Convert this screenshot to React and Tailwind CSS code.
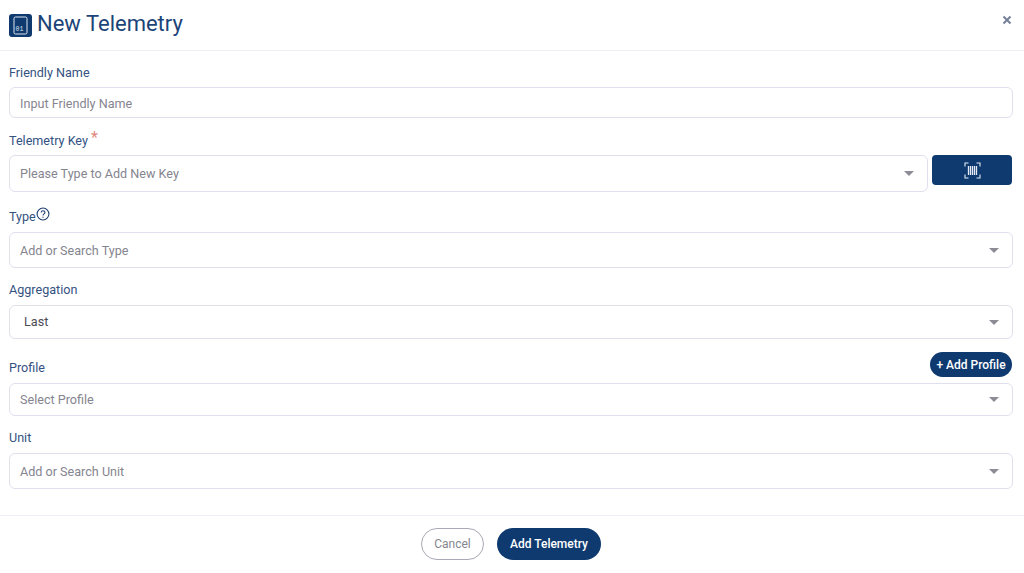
import { useState } from 'react';

const Arrow = () => (
  <span className="ml-auto mr-[13px] h-0 w-0 border-x-[5px] border-t-[5px] border-x-transparent border-t-[#8c8c96]" />
);

const SelectBox = ({ text, height, dark, flex, pad = 'pt-px' }) => (
  <div
    className={`flex items-center rounded-md border border-[#dfe0ec] bg-white ${height} ${dark ? 'pl-[14px]' : 'pl-[10px]'} ${flex ? 'flex-1' : 'w-full'}`}
  >
    <span className={`text-[12.6px] ${dark ? 'text-[#4a4a55]' : `text-[#85858f] ${pad}`}`}>{text}</span>
    <Arrow />
  </div>
);

const Label = ({ children, className }) => (
  <div className={`pt-px text-[12.6px] leading-[18px] text-[#34527f] ${className}`}>{children}</div>
);

const TelemetryIcon = () => (
  <span className="flex h-[23px] w-[23px] items-center justify-center rounded-[3px] bg-[#0f3a70]">
    <svg width="15" height="19" viewBox="0 0 15 19" fill="none">
      <rect x="1" y="1" width="13" height="17" rx="1.5" stroke="#dfe6f0" strokeWidth="1" />
      <text x="2.6" y="14.5" fontSize="6.5" fill="#dfe6f0" fontFamily="Liberation Mono, monospace">01</text>
    </svg>
  </span>
);

const ScanIcon = () => (
  <svg width="17" height="17" viewBox="0 0 17 17" fill="none" stroke="#e6ebf3" strokeWidth="1.1">
    <path d="M1 4.5V1h3.5M12.5 1H16v3.5M16 12.5V16h-3.5M4.5 16H1v-3.5" />
    <path d="M4.5 4v9M6.5 4v9M8.5 4v9M10.5 4v9M12.5 4v9" strokeWidth="1.3" />
  </svg>
);

const App = () => {
  const [name, setName] = useState('');

  return (
    <div className="flex h-[573px] w-[1024px] flex-col overflow-hidden bg-white font-['Roboto',sans-serif]">
      <div className="flex h-[51px] shrink-0 items-center border-b border-[#eeeef5] pl-[9px] pr-[12px]">
        <TelemetryIcon />
        <h1 className="mb-[2px] ml-[5px] text-[22px] font-normal leading-[28px] text-[#1c4478]">New Telemetry</h1>
        <svg className="ml-auto mb-[11px]" width="10" height="10" viewBox="0 0 10 10" stroke="#76809a" strokeWidth="2">
          <path d="M1.5 1.5l7 7M8.5 1.5l-7 7" />
        </svg>
      </div>

      <div className="flex flex-1 flex-col pl-[9px] pr-[11.5px]">
        <Label className="mt-[12px]">Friendly Name</Label>
        <input
          value={name}
          onChange={(e) => setName(e.target.value)}
          placeholder="Input Friendly Name"
          className="mt-[5px] h-[31px] w-full rounded-md border border-[#dfe0ec] px-[10px] pt-px text-[12.6px] outline-none placeholder:text-[#85858f]"
        />

        <Label className="mt-[13px]">
          Telemetry Key <span className="relative -top-[2px] text-[16px] leading-[14px] text-[#e08a80]">*</span>
        </Label>
        <div className="mt-[5px] flex items-start gap-[4px] pr-[0.5px]">
          <SelectBox text="Please Type to Add New Key" height="h-[37px]" flex />
          <button className="flex h-[30px] w-[80px] items-center justify-center rounded-[4px] bg-[#0f3a70]">
            <ScanIcon />
          </button>
        </div>

        <Label className="mt-[15px] flex items-start">
          Type
          <svg className="mt-[-1px]" width="14" height="14" viewBox="0 0 13 13" fill="none" stroke="#1f3f70">
            <circle cx="6.5" cy="6.5" r="5.5" strokeWidth="1" />
            <path d="M4.8 5.2c0-2.2 3.5-2.2 3.5-.1 0 1.3-1.8 1.3-1.8 2.7" strokeWidth="1" />
            <path d="M6.5 9v1" strokeWidth="1.1" />
          </svg>
        </Label>
        <div className="mt-[6px]">
          <SelectBox text="Add or Search Type" height="h-[36px]" pad="pt-[2px]" />
        </div>

        <Label className="mt-[12px]">Aggregation</Label>
        <div className="mt-[6px]">
          <SelectBox text="Last" height="h-[34px]" dark />
        </div>

        <div className="mt-[13px] flex items-end justify-between pr-[0.5px]">
          <Label>Profile</Label>
          <button className="flex h-[25px] w-[82px] items-center justify-center rounded-full bg-[#0f3a70] text-[12px] font-medium text-white">
            + Add Profile
          </button>
        </div>
        <div className="mt-[6px]">
          <SelectBox text="Select Profile" height="h-[33px]" />
        </div>

        <Label className="mt-[12px]">Unit</Label>
        <div className="mt-[6px]">
          <SelectBox text="Add or Search Unit" height="h-[36px]" pad="pt-[3px]" />
        </div>
      </div>

      <div className="flex h-[58px] shrink-0 items-start justify-center gap-[13px] border-t border-[#eeeef5] pr-[2px] pt-[12px]">
        <button className="h-[32px] w-[63px] rounded-full border border-[#a9a9b8] text-[12px] text-[#85858f]">Cancel</button>
        <button className="h-[32px] w-[104px] rounded-full bg-[#0f3a70] text-[12px] font-medium text-white">Add Telemetry</button>
      </div>
    </div>
  );
};

export default App;
